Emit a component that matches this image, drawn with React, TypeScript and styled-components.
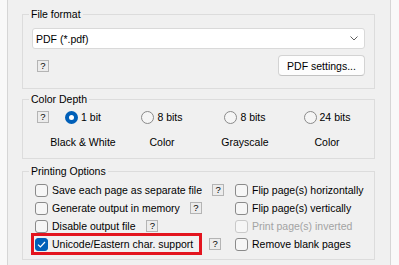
import { ReactNode } from 'react'
import styled, { createGlobalStyle } from 'styled-components'

const GlobalStyle = createGlobalStyle`
  html, body {
    margin: 0;
    padding: 0;
    background: #f9f9f9;
  }

  body {
    font-family: "Liberation Sans", Arial, sans-serif;
    font-size: 10.5px;
    color: #000;
  }
`

const Window = styled.div`
  width: 399px;
  height: 265px;
  box-sizing: border-box;
  padding: 0 8px 0 7px;
  overflow: hidden;
`

const Panel = styled.div`
  height: 100%;
  box-sizing: border-box;
  border-left: 1px solid #d6d6d6;
  border-right: 1px solid #d6d6d6;
  background: #f0f0f0;
  padding: 6px 15px 0 14px;
  display: flex;
  flex-direction: column;
`

const Group = styled.fieldset<{ $top?: number; $bottom: number }>`
  margin: ${p => p.$top ?? 0}px 0 0;
  padding: 0 9px ${p => p.$bottom}px;
  border: 1px solid #dcdcdc;
  min-width: 0;
`

const Title = styled.legend`
  padding: 0 2px;
  margin-left: -3px;
  line-height: 16px;
`

const Dropdown = styled.div`
  margin-top: 6px;
  height: 21px;
  box-sizing: border-box;
  background: #fff;
  border: 1px solid #d9d9d9;
  border-radius: 3px;
  display: flex;
  align-items: center;
  justify-content: space-between;
  padding: 0 6px 0 3px;
`

const FormatRow = styled.div`
  margin-top: 6px;
  display: flex;
  align-items: center;
  justify-content: space-between;
  padding-left: 5px;
`

const Help = styled.span<{ $gap?: number }>`
  width: 12px;
  height: 12px;
  box-sizing: border-box;
  flex: none;
  margin-left: ${p => p.$gap ?? 0}px;
  border: 1px solid #b4b4b4;
  background: #ececec;
  display: inline-flex;
  align-items: center;
  justify-content: center;
  font-size: 9.5px;
  line-height: 1;
`

const Button = styled.button`
  width: 87px;
  height: 21px;
  box-sizing: border-box;
  background: #fdfdfd;
  border: 1px solid #d3d3d3;
  border-bottom-color: #c2c2c2;
  border-radius: 4px;
  font: inherit;
  color: #000;
  padding: 0;
`

const DepthGrid = styled.div`
  margin: 2px 0 0 5px;
  display: grid;
  grid-template-columns: 92px 66px 100px 64px;
  grid-template-rows: 16px 16px;
  row-gap: 9px;
  align-items: center;
  justify-items: center;
`

const HelpCell = styled.div`
  grid-row: 1;
  grid-column: 1;
  justify-self: start;
  display: flex;
`

const Option = styled.label`
  display: flex;
  align-items: center;
  gap: 3px;
  white-space: nowrap;
`

const Radio = styled.span<{ $on?: boolean }>`
  width: 13px;
  height: 13px;
  box-sizing: border-box;
  border-radius: 50%;
  flex: none;
  border: ${p => (p.$on ? '4px solid #005fb8' : '1px solid #8a8a8a')};
  background: ${p => (p.$on ? '#fff' : '#f5f5f5')};
`

const OptionsGrid = styled.div`
  margin: 2px 0 0 3px;
  display: grid;
  grid-template-columns: 200px 1fr;
  grid-auto-rows: 18px;
  grid-auto-flow: column;
  grid-template-rows: repeat(4, 18px);
  align-items: center;
`

const Cell = styled.div`
  display: flex;
  align-items: center;
`

const Check = styled.label<{ $disabled?: boolean; $marked?: boolean }>`
  display: flex;
  align-items: center;
  gap: 4px;
  white-space: nowrap;
  color: ${p => (p.$disabled ? '#a3a3a3' : '#000')};
  padding-right: ${p => (p.$marked ? 5 : 0)}px;
  outline: ${p => (p.$marked ? '3px solid #e3141e' : 'none')};
  outline-offset: 1px;
  line-height: 14px;
`

const Box = styled.span<{ $on?: boolean; $disabled?: boolean }>`
  width: 13px;
  height: 13px;
  box-sizing: border-box;
  border-radius: 3px;
  flex: none;
  display: inline-flex;
  align-items: center;
  justify-content: center;
  border: 1px solid ${p => (p.$on ? '#005fb8' : p.$disabled ? '#c9c9c9' : '#8a8a8a')};
  background: ${p => (p.$on ? '#005fb8' : '#f6f6f6')};
`

function CheckOption({
  children,
  on,
  disabled,
  marked,
}: {
  children: ReactNode
  on?: boolean
  disabled?: boolean
  marked?: boolean
}) {
  return (
    <Check $disabled={disabled} $marked={marked}>
      <Box $on={on} $disabled={disabled}>
        {on && (
          <svg width="9" height="7" viewBox="0 0 9 7">
            <path d="M1 3.6 L3.4 6 L8 1" fill="none" stroke="#fff" strokeWidth="1.2" />
          </svg>
        )}
      </Box>
      {children}
    </Check>
  )
}

const depths = [
  { bits: '1 bit', name: 'Black & White', on: true },
  { bits: '8 bits', name: 'Color' },
  { bits: '8 bits', name: 'Grayscale' },
  { bits: '24 bits', name: 'Color' },
]

function App() {
  return (
    <Window>
      <GlobalStyle />
      <Panel>
        <Group $bottom={12}>
          <Title>File format</Title>
          <Dropdown>
            <span>PDF (*.pdf)</span>
            <svg width="8" height="5" viewBox="0 0 8 5">
              <path d="M0.5 0.5 L4 4 L7.5 0.5" fill="none" stroke="#5f5f5f" strokeWidth="1" />
            </svg>
          </Dropdown>
          <FormatRow>
            <Help>?</Help>
            <Button>PDF settings...</Button>
          </FormatRow>
        </Group>

        <Group $top={2} $bottom={8}>
          <Title>Color Depth</Title>
          <DepthGrid>
            <HelpCell>
              <Help>?</Help>
            </HelpCell>
            {depths.map((d, i) => (
              <Option key={'r' + i} style={{ gridRow: 1, gridColumn: i + 1 }}>
                <Radio $on={d.on} />
                {d.bits}
              </Option>
            ))}
            {depths.map((d, i) => (
              <span key={'n' + i} style={{ gridRow: 2, gridColumn: i + 1 }}>
                {d.name}
              </span>
            ))}
          </DepthGrid>
        </Group>

        <Group $top={4} $bottom={6}>
          <Title>Printing Options</Title>
          <OptionsGrid>
            <Cell>
              <CheckOption>Save each page as separate file</CheckOption>
              <Help $gap={10}>?</Help>
            </Cell>
            <Cell>
              <CheckOption>Generate output in memory</CheckOption>
              <Help $gap={10}>?</Help>
            </Cell>
            <Cell>
              <CheckOption>Disable output file</CheckOption>
              <Help $gap={11}>?</Help>
            </Cell>
            <Cell>
              <CheckOption on marked>
                Unicode/Eastern char. support
              </CheckOption>
              <Help $gap={11}>?</Help>
            </Cell>
            <Cell>
              <CheckOption>Flip page(s) horizontally</CheckOption>
            </Cell>
            <Cell>
              <CheckOption>Flip page(s) vertically</CheckOption>
            </Cell>
            <Cell>
              <CheckOption disabled>Print page(s) inverted</CheckOption>
            </Cell>
            <Cell>
              <CheckOption>Remove blank pages</CheckOption>
            </Cell>
          </OptionsGrid>
        </Group>
      </Panel>
    </Window>
  )
}

export default App
